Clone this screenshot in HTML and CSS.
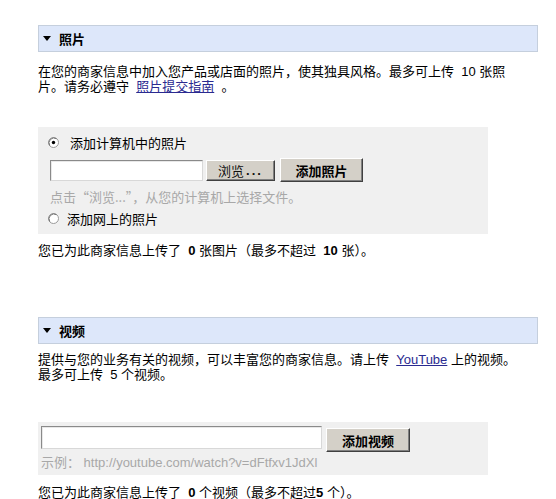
FILE: index.html
```html
<!DOCTYPE html>
<html lang="zh-CN">
<head>
<meta charset="utf-8">
<title>照片和视频</title>
<link rel="stylesheet" href="styles.css">
</head>
<body>
<div class="page">
  <section class="section">
    <div class="section-header">
      <svg class="tri" width="8" height="5" viewBox="0 0 8 5"><polygon points="0,0 8,0 4,5" fill="#000"/></svg>
      <span>照片</span>
    </div>
    <p class="para">在您的商家信息中加入您产品或店面的照片，使其独具风格。最多可上传&nbsp; 10 张照<br>片。请务必遵守&nbsp; <a class="link" href="#">照片提交指南</a>&nbsp; 。</p>
    <div class="box box-photo">
      <div class="radio-row">
        <svg class="radio" width="11" height="11" viewBox="0 0 11 11"><circle cx="5.5" cy="5.5" r="5" fill="#fff" stroke="#9a9a9a"/><path d="M1.6 8.4 A5 5 0 0 1 8.4 1.6" fill="none" stroke="#6f6f6f"/><circle cx="5.5" cy="5.5" r="1.7" fill="#000"/></svg>
        <span class="radio-label">添加计算机中的照片</span>
      </div>
      <div class="upload-row">
        <span class="text-input file-input"></span>
        <span class="btn btn-browse">浏览<span class="dots">...</span></span>
        <span class="btn btn-strong btn-addphoto">添加照片</span>
      </div>
      <div class="hint hint-cjk">点击“浏览...”，从您的计算机上选择文件。</div>
      <div class="radio-row radio-row-2">
        <svg class="radio" width="11" height="11" viewBox="0 0 11 11"><circle cx="5.5" cy="5.5" r="5" fill="#fff" stroke="#9a9a9a"/><path d="M1.6 8.4 A5 5 0 0 1 8.4 1.6" fill="none" stroke="#6f6f6f"/></svg>
        <span class="radio-label radio-label-2">添加网上的照片</span>
      </div>
    </div>
    <p class="summary">您已为此商家信息上传了&nbsp; <b>0</b> 张图片（最多不超过&nbsp; <b>10</b> 张）。</p>
  </section>

  <section class="section section-video">
    <div class="section-header">
      <svg class="tri" width="8" height="5" viewBox="0 0 8 5"><polygon points="0,0 8,0 4,5" fill="#000"/></svg>
      <span>视频</span>
    </div>
    <p class="para para-video">提供与您的业务有关的视频，可以丰富您的商家信息。请上传&nbsp; <a class="link" href="#">YouTube</a> 上的视频。<br>最多可上传&nbsp; 5 个视频。</p>
    <div class="box box-video">
      <div class="video-row">
        <span class="text-input url-input"></span>
        <span class="btn btn-strong btn-addvideo">添加视频</span>
      </div>
      <div class="hint hint-video">示例：&nbsp;http://youtube.com/watch?v=dFtfxv1JdXl</div>
    </div>
    <p class="summary summary-video">您已为此商家信息上传了&nbsp; <b>0</b> 个视频（最多不超过<b>5</b> 个）。</p>
  </section>
</div>
</body>
</html>
```

FILE: styles.css
```css
html, body {
  margin: 0;
  padding: 0;
  background: #fff;
}

body {
  font-family: "Liberation Sans", "Noto Sans CJK SC", sans-serif;
  font-size: 13px;
  color: #000;
}

.page {
  padding: 25px 18px 0 38px;
  width: 500px;
}

.section-header {
  height: 25px;
  border: 1px solid #c5cfdd;
  background: #dde7fa;
  display: flex;
  align-items: center;
  font-weight: bold;
  font-size: 13px;
}

.tri {
  margin-left: 4px;
  margin-right: 8px;
}

.para {
  margin: 12px 0 0;
  line-height: 15px;
}

.link {
  color: #2a2a90;
  text-decoration: underline;
}

.box {
  background: #f0f0f0;
  width: 450px;
}

.box-photo {
  margin-top: 33px;
  padding: 7px 0 8px 10px;
  box-sizing: border-box;
}

.radio-row {
  display: flex;
  align-items: center;
  height: 16px;
}

.radio {
  flex: none;
}

.radio-label {
  margin-left: 11px;
}

.radio-label-2 {
  margin-left: 8px;
}

.upload-row {
  display: flex;
  align-items: center;
  margin: 8px 0 0 2px;
  height: 24px;
}

.text-input {
  display: block;
  background: #fff;
  box-sizing: border-box;
  border: 1px solid;
  border-color: #8a8a8a #d8d8d8 #d8d8d8 #8a8a8a;
  box-shadow: inset 1px 1px 0 #e8e8e8;
}

.file-input {
  width: 153px;
  height: 21px;
}

.btn {
  display: flex;
  align-items: center;
  justify-content: center;
  box-sizing: border-box;
  background: #d4d0c8;
  border: 1px solid;
  border-color: #ffffff #404040 #404040 #ffffff;
  box-shadow: inset -1px -1px 0 #808080;
  font-size: 13px;
}

.btn-browse {
  margin-left: 3px;
  width: 69px;
  height: 21px;
  color: #111;
}

.dots {
  letter-spacing: 2px;
  font-weight: bold;
  margin-left: 2px;
}

.btn-strong {
  font-weight: bold;
}

.btn-addphoto {
  margin-left: 5px;
  width: 83px;
  height: 24px;
}

.hint {
  color: #a8a8a8;
  line-height: 16px;
}

.hint-cjk {
  font-family: "Noto Sans CJK SC", sans-serif;
}

.box-photo .hint {
  margin: 7px 0 0 2px;
}

.radio-row-2 {
  margin-top: 5px;
}

.summary {
  margin: 9px 0 0;
  line-height: 16px;
}

.section-video {
  margin-top: 58px;
}

.para-video {
  margin-top: 8px;
}

.box-video {
  margin-top: 40px;
  padding: 4px 0 4px 3px;
  box-sizing: border-box;
}

.video-row {
  display: flex;
  align-items: flex-start;
}

.url-input {
  width: 281px;
  height: 23px;
}

.btn-addvideo {
  margin: 2px 0 0 4px;
  width: 84px;
  height: 24px;
}

.hint-video {
  margin-top: 3px;
  line-height: 16px;
}

.summary-video {
  margin-top: 10px;
}
```
